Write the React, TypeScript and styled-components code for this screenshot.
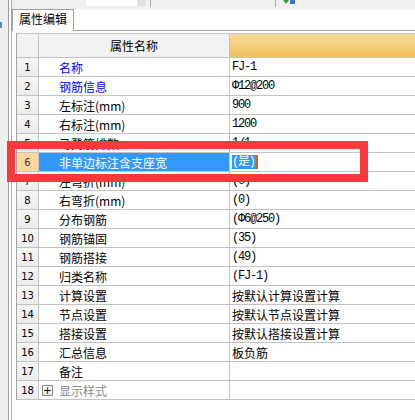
import styled, { createGlobalStyle } from "styled-components";

const GlobalStyle = createGlobalStyle`
  html, body {
    margin: 0;
    padding: 0;
    background: #ffffff;
  }
  body {
    font-family: "Noto Sans CJK SC", "Liberation Sans", sans-serif;
  }
`;

const Frame = styled.div`
  position: relative;
  width: 415px;
  height: 420px;
  overflow: hidden;
  display: flex;
  background: #ffffff;
`;

const Rail = styled.div`
  width: 8px;
  background: #efefef;
  border-right: 1px solid #9c9c9c;
  padding-top: 22px;
`;

const RailMark = styled.div`
  width: 2px;
  height: 6px;
  background: #4d8fd6;
`;

const Gutter = styled.div`
  width: 2px;
  background: #ffffff;
  border-right: 1px solid #a9a9a9;
`;

const Workspace = styled.div`
  flex: 1;
  display: flex;
  flex-direction: column;
  min-width: 0;
`;

const TopStrip = styled.div`
  height: 9px;
  display: flex;
  align-items: stretch;
  background: #f0f0f0;
`;

const StripGap = styled.div<{ $w: number }>`
  width: ${(p) => p.$w}px;
`;

const StripInput = styled.div`
  width: 51px;
  background: #ffffff;
  margin-bottom: 3px;
`;

const StripDrop = styled.div`
  width: 9px;
  background: #e2e2e2;
  margin-bottom: 3px;
`;

const StripSep = styled.div`
  width: 1px;
  background: #a8a8a8;
  margin-bottom: 2px;
`;

const StripIcon = styled.svg`
  width: 14px;
  height: 6px;
  margin-left: 6px;
`;

const TabRow = styled.div`
  display: flex;
  height: 22px;
`;

const Tab = styled.div`
  width: 62px;
  height: 22px;
  box-sizing: border-box;
  border: 1px solid #9f9f9f;
  border-bottom: none;
  background: #ffffff;
  font-size: 12px;
  line-height: 18px;
  text-align: center;
  color: #000000;
`;

const TabFiller = styled.div`
  flex: 1;
  border-bottom: 1px solid #9f9f9f;
`;

const Panel = styled.div`
  flex: 1;
  padding: 2px 0 0 4px;
`;

const Table = styled.div`
  border-left: 1px solid #a4a4a4;
  border-top: 1px solid #c4c4c4;
`;

const Row = styled.div<{ $head?: boolean }>`
  display: grid;
  grid-template-columns: 22px 191px 1fr;
  height: ${(p) => (p.$head ? 24 : 19)}px;
  box-sizing: border-box;
  border-bottom: 1px solid #c3c3c3;
`;

const NumCell = styled.div<{ $active?: boolean }>`
  border-right: 1px solid #c3c3c3;
  background: ${(p) =>
    p.$active ? "#fcd89a" : "linear-gradient(#f6f6f6, #ececec)"};
  color: ${(p) => (p.$active ? "#4b2368" : "#000000")};
  font-family: "DejaVu Sans", "Liberation Sans", sans-serif;
  font-size: 10px;
  display: flex;
  align-items: center;
  justify-content: center;
`;

const NameCell = styled.div<{
  $tone?: "link" | "muted" | "selected";
  $indent?: number;
}>`
  border-right: 1px solid #c3c3c3;
  padding-left: ${(p) => p.$indent ?? 20}px;
  display: flex;
  align-items: center;
  font-size: 12px;
  white-space: nowrap;
  overflow: hidden;
  background: ${(p) => (p.$tone === "selected" ? "#3399ff" : "transparent")};
  color: ${(p) =>
    p.$tone === "link"
      ? "#0000ff"
      : p.$tone === "muted"
      ? "#8a8a8a"
      : p.$tone === "selected"
      ? "#ffffff"
      : "#000000"};
`;

const HeadName = styled.div`
  border-right: 1px solid #c3c3c3;
  background: #f2f2f2;
  display: flex;
  align-items: center;
  justify-content: center;
  font-size: 12px;
  color: #000000;
`;

const HeadNum = styled.div`
  border-right: 1px solid #c3c3c3;
  background: #f2f2f2;
`;

const HeadValue = styled.div`
  background: linear-gradient(#fadb9f, #f1c05c);
`;

const ValueCell = styled.div<{ $mono?: boolean }>`
  padding-left: 2px;
  display: flex;
  align-items: center;
  white-space: nowrap;
  overflow: hidden;
  color: #000000;
  font-family: ${(p) =>
    p.$mono
      ? `"Liberation Mono", "Noto Sans CJK SC", monospace`
      : `"Noto Sans CJK SC", sans-serif`};
  font-size: 12px;
  letter-spacing: ${(p) => (p.$mono ? "-1.2px" : "0")};
`;

const Selected = styled.span`
  background: #3399ff;
  color: #ffffff;
  line-height: 14px;
  padding-right: 1px;
`;

const Caret = styled.span`
  width: 2px;
  height: 14px;
  background: #c86a14;
`;

const Expander = styled.span`
  width: 9px;
  height: 9px;
  border: 1px solid #8c8c8c;
  background: linear-gradient(#ffffff, #e4e4e4);
  margin-right: 6px;
  display: flex;
  align-items: center;
  justify-content: center;
  font-family: "DejaVu Sans", sans-serif;
  font-size: 10px;
  line-height: 9px;
  color: #000000;
`;

const Highlight = styled.div`
  position: absolute;
  left: 7px;
  top: 141px;
  width: 361px;
  height: 41px;
  box-sizing: border-box;
  border: 8px solid #f53b3b;
  pointer-events: none;
`;

type Prop = {
  name: string;
  value: string;
  mono?: boolean;
  tone?: "link" | "muted";
};

const props: Prop[] = [
  { name: "名称", value: "FJ-1", mono: true, tone: "link" },
  { name: "钢筋信息", value: "Φ12@200", mono: true, tone: "link" },
  { name: "左标注(mm)", value: "900", mono: true },
  { name: "右标注(mm)", value: "1200", mono: true },
  { name: "马凳筋排数", value: "1/1", mono: true },
  { name: "非单边标注含支座宽", value: "(是)", mono: true },
  { name: "左弯折(mm)", value: "(0)", mono: true },
  { name: "右弯折(mm)", value: "(0)", mono: true },
  { name: "分布钢筋", value: "(Φ6@250)", mono: true },
  { name: "钢筋锚固", value: "(35)", mono: true },
  { name: "钢筋搭接", value: "(49)", mono: true },
  { name: "归类名称", value: "(FJ-1)", mono: true },
  { name: "计算设置", value: "按默认计算设置计算" },
  { name: "节点设置", value: "按默认节点设置计算" },
  { name: "搭接设置", value: "按默认搭接设置计算" },
  { name: "汇总信息", value: "板负筋" },
  { name: "备注", value: "" },
  { name: "显示样式", value: "", tone: "muted" },
];

const ACTIVE = 6;

export default function App() {
  return (
    <>
      <GlobalStyle />
      <Frame>
        <Rail>
          <RailMark />
        </Rail>
        <Gutter />
        <Workspace>
          <TopStrip>
            <StripGap $w={74} />
            <StripInput />
            <StripDrop />
            <StripGap $w={4} />
            <StripSep />
            <StripGap $w={124} />
            <StripSep />
            <StripIcon viewBox="0 0 14 6">
              <path d="M1 0 L4 4 L7 0 Z" fill="#3a9a3a" />
              <rect x="8" y="0" width="5" height="4" fill="#3f6fc8" />
            </StripIcon>
          </TopStrip>
          <TabRow>
            <Tab>属性编辑</Tab>
            <TabFiller />
          </TabRow>
          <Panel>
            <Table>
              <Row $head>
                <HeadNum />
                <HeadName>属性名称</HeadName>
                <HeadValue />
              </Row>
              {props.map((p, i) => {
                const n = i + 1;
                const active = n === ACTIVE;
                const group = n === props.length;
                return (
                  <Row key={n}>
                    <NumCell $active={active}>{n}</NumCell>
                    <NameCell
                      $tone={active ? "selected" : p.tone}
                      $indent={group ? 3 : 20}
                    >
                      {group && <Expander>+</Expander>}
                      {p.name}
                    </NameCell>
                    <ValueCell $mono={p.mono}>
                      {active ? (
                        <>
                          <Selected>{p.value}</Selected>
                          <Caret />
                        </>
                      ) : (
                        p.value
                      )}
                    </ValueCell>
                  </Row>
                );
              })}
            </Table>
          </Panel>
        </Workspace>
        <Highlight />
      </Frame>
    </>
  );
}
